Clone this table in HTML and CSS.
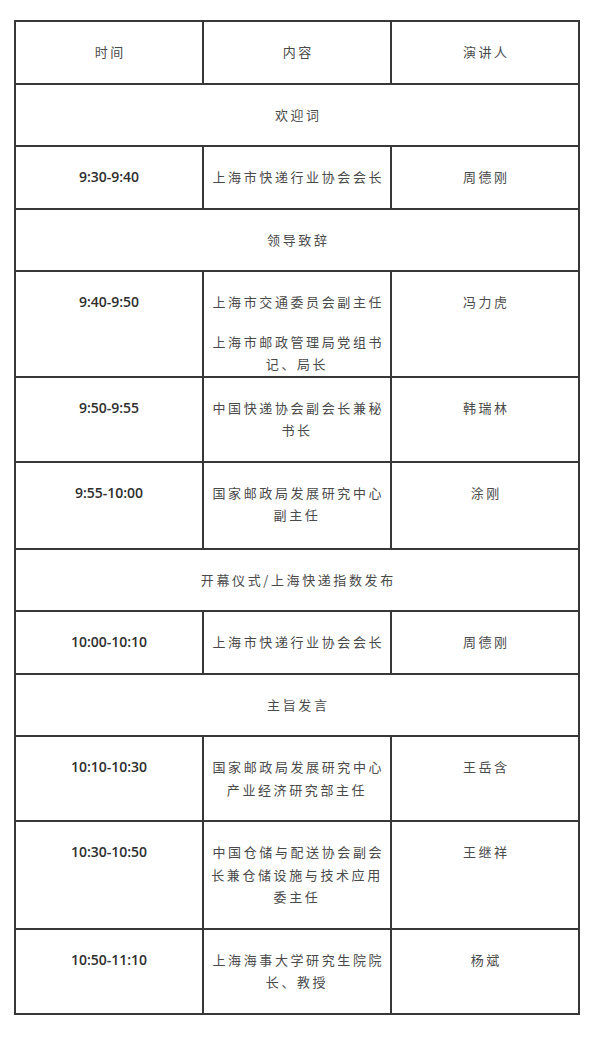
FILE: index.html
```html
<!DOCTYPE html>
<html lang="zh-CN">
<head>
<meta charset="utf-8">
<title>议程</title>
<link rel="stylesheet" href="styles.css">
</head>
<body>
<table class="agenda">
  <colgroup>
    <col class="c1"><col class="c2"><col class="c3">
  </colgroup>
  <tr>
    <td class="zh">时间</td>
    <td class="zh">内容</td>
    <td class="zh">演讲人</td>
  </tr>
  <tr><td class="zh" colspan="3">欢迎词</td></tr>
  <tr>
    <td class="time">9:30-9:40</td>
    <td class="zh">上海市快递行业协会会长</td>
    <td class="zh">周德刚</td>
  </tr>
  <tr><td class="zh" colspan="3">领导致辞</td></tr>
  <tr>
    <td class="time">9:40-9:50</td>
    <td class="zh multi">
      <p class="para">上海市交通委员会副主任</p>
      <p class="para gap">上海市邮政管理局党组书记、局长</p>
    </td>
    <td class="zh">冯力虎</td>
  </tr>
  <tr>
    <td class="time">9:50-9:55</td>
    <td class="zh">中国快递协会副会长兼秘书长</td>
    <td class="zh">韩瑞林</td>
  </tr>
  <tr class="tall">
    <td class="time">9:55-10:00</td>
    <td class="zh">国家邮政局发展研究中心副主任</td>
    <td class="zh">涂刚</td>
  </tr>
  <tr><td class="zh" colspan="3">开幕仪式/上海快递指数发布</td></tr>
  <tr>
    <td class="time">10:00-10:10</td>
    <td class="zh">上海市快递行业协会会长</td>
    <td class="zh">周德刚</td>
  </tr>
  <tr><td class="zh" colspan="3">主旨发言</td></tr>
  <tr>
    <td class="time">10:10-10:30</td>
    <td class="zh">国家邮政局发展研究中心产业经济研究部主任</td>
    <td class="zh">王岳含</td>
  </tr>
  <tr>
    <td class="time">10:30-10:50</td>
    <td class="zh">中国仓储与配送协会副会长兼仓储设施与技术应用委主任</td>
    <td class="zh">王继祥</td>
  </tr>
  <tr>
    <td class="time">10:50-11:10</td>
    <td class="zh">上海海事大学研究生院院长、教授</td>
    <td class="zh">杨斌</td>
  </tr>
</table>
</body>
</html>
```
FILE: styles.css
```css
html, body {
  margin: 0;
  padding: 0;
  background: #ffffff;
}

.agenda {
  border-collapse: collapse;
  table-layout: fixed;
  width: 564px;
  margin: 20px 0 0 14px;
}

.c1 { width: 188px; }
.c2 { width: 188px; }
.c3 { width: 188px; }

.agenda td {
  border: 2px solid #383838;
  padding: 19px 5px;
  line-height: 22.5px;
  text-align: center;
  vertical-align: top;
}

.agenda .tall td {
  padding-bottom: 21px;
}

.zh {
  font-family: "Noto Sans CJK SC", "Noto Sans", sans-serif;
  font-size: 13px;
  letter-spacing: 2.6px;
  text-indent: 2.6px;
  color: #4a4a4a;
}

.time {
  font-family: "Open Sans", "Liberation Sans", sans-serif;
  font-weight: 600;
  font-size: 14px;
  color: #2e2e2e;
}

.agenda td.multi {
  padding-bottom: 0;
}

.para {
  margin: 0;
}

.para.gap {
  margin-top: 17px;
}
```
